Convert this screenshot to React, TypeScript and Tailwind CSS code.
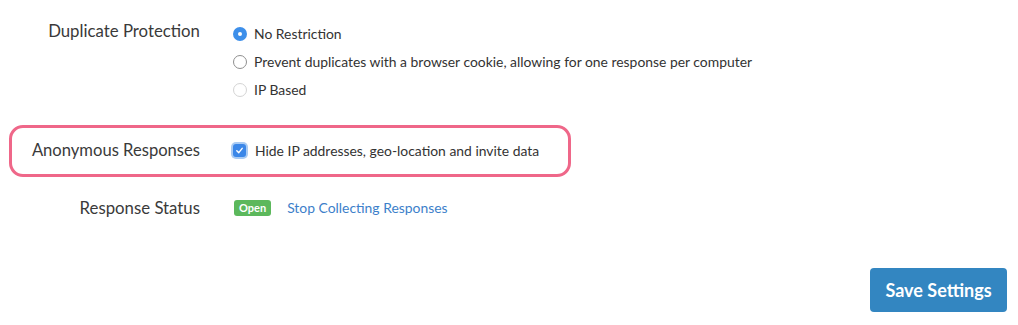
function Radio({ checked, disabled }: { checked?: boolean; disabled?: boolean }) {
  if (checked) {
    return (
      <span className="inline-flex w-[14px] h-[14px] rounded-full bg-[#3d8fea] items-center justify-center">
        <span className="w-[4px] h-[4px] rounded-full bg-white" />
      </span>
    );
  }
  return (
    <span
      className={
        disabled
          ? "inline-block w-[14px] h-[14px] rounded-full border border-[#d4d4d4] bg-white"
          : "inline-block w-[14px] h-[14px] rounded-full border border-[#8f8f8f] bg-white"
      }
    />
  );
}

export default function App() {
  return (
    <div className="w-[1018px] h-[325px] bg-white text-[#333] font-['Lato',sans-serif] pt-[20px]">
      <div className="flex">
        <div className="w-[200px] text-right text-[16.8px] leading-[22px] text-[#3a3a3a]">Duplicate Protection</div>
        <div className="ml-[33px] flex flex-col text-[13.9px]">
          <label className="h-[28px] flex items-center gap-[7px]">
            <Radio checked />
            No Restriction
          </label>
          <label className="h-[28px] flex items-center gap-[7px]">
            <Radio />
            Prevent duplicates with a browser cookie, allowing for one response per computer
          </label>
          <label className="h-[28px] flex items-center gap-[7px]">
            <Radio disabled />
            IP Based
          </label>
        </div>
      </div>

      <div className="ml-[9px] mt-[21px] w-[562px] h-[52px] border-[3px] border-[#ef6789] rounded-[14px] flex items-center">
        <div className="w-[188px] text-right text-[16.6px] leading-[20px] pb-[3px] text-[#3a3a3a]">Anonymous Responses</div>
        <label className="ml-[33px] flex items-center gap-[9px] text-[13.9px]">
          <span className="inline-flex w-[13px] h-[13px] rounded-[3px] bg-[#3b87e8] ring-[2px] ring-[#a9cbf3] items-center justify-center">
            <svg width="9" height="9" viewBox="0 0 10 10" fill="none">
              <path d="M2 5.2 L4.2 7.4 L8 2.6" stroke="white" strokeWidth="1.6" strokeLinecap="round" strokeLinejoin="round" />
            </svg>
          </span>
          Hide IP addresses, geo-location and invite data
        </label>
      </div>

      <div className="flex items-center mt-[19px] h-[24px]">
        <div className="w-[200px] text-right text-[16.8px] text-[#3a3a3a]">Response Status</div>
        <span className="ml-[34px] bg-[#5cb85c] text-white text-[11px] font-bold rounded-[3px] px-[5px] h-[16px] leading-[16px]">
          Open
        </span>
        <a className="ml-[16px] text-[13.9px] text-[#3d7fca] cursor-pointer">Stop Collecting Responses</a>
      </div>

      <div className="flex justify-end pr-[11px] mt-[48px]">
        <button className="w-[137px] h-[44px] bg-[#3386c1] text-white font-bold text-[18px] rounded-[4px]">
          Save Settings
        </button>
      </div>
    </div>
  );
}
